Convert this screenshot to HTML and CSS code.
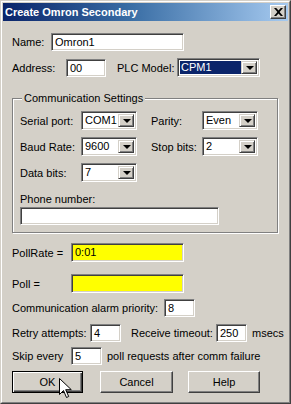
FILE: index.html
```html
<!DOCTYPE html>
<html>
<head>
<meta charset="utf-8">
<link rel="stylesheet" href="styles.css">
</head>
<body>
<div class="win">
  <div class="win-in">
    <div class="title">
      <span class="title-text">Create Omron Secondary</span>
      <span class="close"><svg width="9" height="8" viewBox="0 0 9 8"><path d="M0 0h2.2l2.3 2.6L6.8 0H9L5.6 4 9 8H6.8L4.5 5.4 2.2 8H0l3.4-4z" fill="#000"/></svg></span>
    </div>
    <div class="content">
      <div class="row r-name">
        <span class="lbl w-name">Name:</span>
        <div class="edit e-name">Omron1</div>
      </div>
      <div class="row r-addr">
        <span class="lbl w-addr">Address:</span>
        <div class="edit e-addr">00</div>
        <span class="lbl w-plc">PLC Model:</span>
        <div class="combo c-plc"><span class="val sel">CPM1</span><span class="drop"><i></i></span></div>
      </div>

      <div class="group">
        <span class="legend">Communication Settings</span>
        <div class="row r-g1">
          <span class="lbl w-g">Serial port:</span>
          <div class="combo c-g"><span class="val">COM1</span><span class="drop"><i></i></span></div>
          <span class="lbl w-g2">Parity:</span>
          <div class="combo c-g"><span class="val">Even</span><span class="drop"><i></i></span></div>
        </div>
        <div class="row r-g2">
          <span class="lbl w-g">Baud Rate:</span>
          <div class="combo c-g"><span class="val">9600</span><span class="drop"><i></i></span></div>
          <span class="lbl w-g2">Stop bits:</span>
          <div class="combo c-g"><span class="val">2</span><span class="drop"><i></i></span></div>
        </div>
        <div class="row r-g2">
          <span class="lbl w-g">Data bits:</span>
          <div class="combo c-g"><span class="val">7</span><span class="drop"><i></i></span></div>
        </div>
        <div class="phone-lbl">Phone number:</div>
        <div class="edit e-phone"></div>
      </div>

      <div class="row r-poll1">
        <span class="lbl w-poll">PollRate =</span>
        <div class="edit e-poll yellow">0:01</div>
      </div>
      <div class="row r-poll2">
        <span class="lbl w-poll">Poll =</span>
        <div class="edit e-poll yellow"></div>
      </div>
      <div class="row r-alarm">
        <span class="lbl w-alarm">Communication alarm priority:</span>
        <div class="edit e-small">8</div>
      </div>
      <div class="row r-retry">
        <span class="lbl w-retry">Retry attempts:</span>
        <div class="edit e-small">4</div>
        <span class="lbl w-recv">Receive timeout:</span>
        <div class="edit e-small">250</div>
        <span class="lbl msecs">msecs</span>
      </div>
      <div class="row r-skip">
        <span class="lbl w-poll">Skip every</span>
        <div class="edit e-small">5</div>
        <span class="lbl after">poll requests after comm failure</span>
      </div>
      <div class="buttons">
        <div class="btn default"><span>OK</span>
          <svg class="cursor" width="13" height="21" viewBox="0 0 13 21"><path d="M0.5 0.5v16l4-4 3 7 2.2-1-3-6.8h5.6z" fill="#fff" stroke="#000" stroke-width="1"/></svg>
        </div>
        <div class="btn b-cancel"><span>Cancel</span></div>
        <div class="btn b-help"><span>Help</span></div>
      </div>
    </div>
  </div>
</div>
</body>
</html>
```

FILE: styles.css
```css
* { box-sizing: border-box; }
html, body { margin: 0; padding: 0; background: #d4d0c8; }
body { font: 11px "Liberation Sans", Arial, sans-serif; color: #000; }

.win {
  width: 291px; height: 404px;
  border: 1px solid; border-color: #d4d0c8 #404040 #404040 #d4d0c8;
  background: #d4d0c8;
}
.win-in {
  height: 100%;
  border: 1px solid; border-color: #fff #808080 #808080 #fff;
  padding: 1px;
}
.title {
  height: 18px;
  background: linear-gradient(to right, #0a246a 0%, #3a6ea5 45%, #a6caf0 100%);
  display: flex; align-items: center; justify-content: space-between;
  padding: 0 2px 0 2px;
  color: #fff; font-weight: bold;
}
.close {
  width: 16px; height: 14px;
  background: #d4d0c8;
  border: 1px solid; border-color: #fff #404040 #404040 #fff;
  box-shadow: inset -1px -1px 0 #808080;
  display: flex; align-items: center; justify-content: center;
  padding-bottom: 1px;
}
.content { padding-left: 9px; }

.row { display: flex; align-items: center; }
.lbl { flex: none; white-space: nowrap; }

.edit {
  height: 18px; background: #fff;
  border: 1px solid; border-color: #808080 #fff #fff #808080;
  box-shadow: inset 1px 1px 0 #404040, inset -1px -1px 0 #d4d0c8;
  padding: 1px 0 0 3px; line-height: 14px;
  white-space: nowrap; overflow: hidden;
}
.yellow { background: #ffff00; }

.combo {
  height: 19px; display: flex; background: #fff;
  border: 1px solid; border-color: #808080 #fff #fff #808080;
  box-shadow: inset 1px 1px 0 #404040, inset -1px -1px 0 #d4d0c8;
  padding: 2px;
}
.combo .val { flex: 1; line-height: 13px; padding-left: 1px; }
.combo .val.sel { background: #0a246a; color: #fff; }
.drop {
  width: 16px; flex: none;
  background: #d4d0c8;
  border: 1px solid; border-color: #d4d0c8 #404040 #404040 #d4d0c8;
  box-shadow: inset 1px 1px 0 #fff, inset -1px -1px 0 #808080;
  display: flex; align-items: center; justify-content: center;
}
.drop i {
  display: block; width: 0; height: 0;
  border-left: 4px solid transparent; border-right: 4px solid transparent;
  border-top: 4px solid #000;
  margin-left: 1px;
}

/* top rows */
.r-name { margin-top: 12px; }
.w-name { width: 39px; }
.e-name { width: 133px; }
.r-addr { margin-top: 7px; }
.w-addr { width: 54px; }
.e-addr { width: 40px; }
.w-plc { width: 60px; margin-left: 11px; }
.c-plc { width: 83px; }

/* group box */
.group {
  margin-top: 21px;
  width: 266px; height: 135px;
  border: 1px solid #808080;
  box-shadow: inset 1px 1px 0 #fff, 1px 1px 0 #fff;
  padding-left: 7px;
}
.legend {
  display: inline-block; vertical-align: top;
  margin-top: -7px; margin-left: 2px;
  padding: 0 2px; background: #d4d0c8; line-height: 13px;
}
.r-g1 { margin-top: 0px; }
.r-g2 { margin-top: 7px; }
.w-g { width: 61px; }
.c-g { width: 56px; }
.w-g2 { width: 51px; margin-left: 14px; }
.phone-lbl { margin-top: 11px; line-height: 13px; }
.e-phone { width: 199px; margin-top: 1px; }

/* lower section */
.r-poll1 { margin-top: 10px; }
.r-poll1 .edit, .r-poll2 .edit { height: 19px; }
.w-poll { width: 59px; }
.e-poll { width: 113px; }
.r-poll2 { margin-top: 12px; }
.r-alarm { margin-top: 6px; }
.w-alarm { width: 152px; }
.e-small { width: 31px; }
.r-retry { margin-top: 7px; }
.w-retry { width: 78px; }
.w-recv { width: 85px; margin-left: 10px; }
.msecs { margin-left: 5px; }
.r-skip { margin-top: 5px; }
.after { margin-left: 5px; }

.buttons { display: flex; margin-top: 6px; }
.btn {
  position: relative;
  height: 22px; width: 72px;
  background: #d4d0c8;
  border: 1px solid; border-color: #fff #404040 #404040 #fff;
  box-shadow: inset -1px -1px 0 #808080;
  display: flex; align-items: center; justify-content: center;
}
.btn.default {
  width: 71px;
  border: 1px solid #000;
  box-shadow: inset 1px 1px 0 #fff, inset -1px -1px 0 #404040, inset -2px -2px 0 #808080;
}
.b-cancel { margin-left: 17px; width: 73px; }
.b-help { margin-left: 15px; }
.cursor { position: absolute; left: 46px; top: 6px; }
```
